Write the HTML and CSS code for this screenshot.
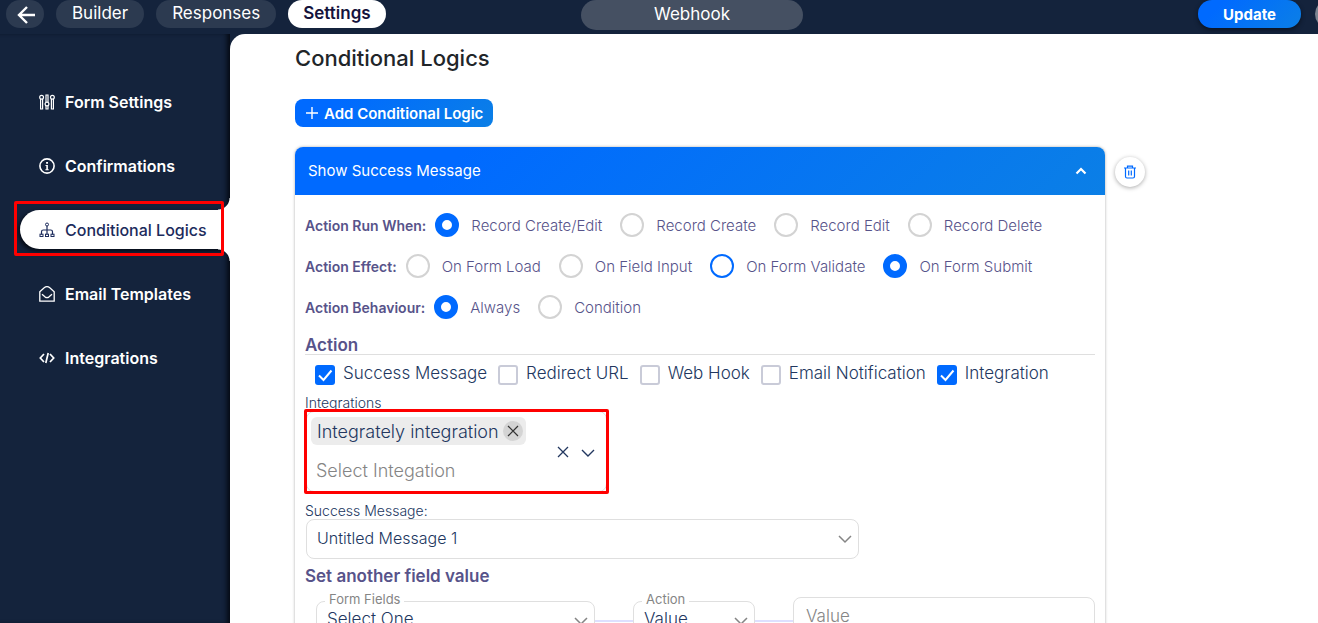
FILE: index.html
```html
<!DOCTYPE html>
<html lang="en">
<head>
<meta charset="utf-8">
<meta name="viewport" content="width=device-width, initial-scale=1">
<title>Webhook - Conditional Logics</title>
<link rel="stylesheet" href="styles.css">
</head>
<body class="app">
<header class="topbar">
  <nav class="tabs" aria-label="Form">
    <a class="tab back" href="#" aria-label="Back"><svg width="20" height="20" viewBox="0 0 20 20"><path d="M19 11H3M11 3L3 11l8 8" fill="none" stroke="currentColor" stroke-width="2.400"/></svg></a>
    <a class="tab" href="#">Builder</a>
    <a class="tab" href="#">Responses</a>
    <a class="tab tab-active" href="#">Settings</a>
  </nav>
  <input class="form-name" type="text" value="Webhook" aria-label="Form name">
  <div class="top-actions">
    <button class="update" type="button">Update</button>
    <a class="close" href="#" aria-label="Close"></a>
  </div>
</header>
<div class="layout">
  <nav class="sidebar" aria-label="Settings">
    <a class="side-link" href="#"><svg class="side-icon" viewBox="0 0 16 16"><g fill="none" stroke="currentColor" stroke-width="1.200"><circle cx="2.600" cy="3.200" r="1.900"/><circle cx="8" cy="10" r="1.900"/><circle cx="13.400" cy="3.200" r="1.900"/><path d="M1.600 5v10h2V5M12.400 5v10h2V5M7 8.200V1h2v7.200M7 11.800V15h2v-3.200"/></g></svg>Form Settings</a>
    <a class="side-link" href="#"><svg class="side-icon" viewBox="0 0 16 16"><circle cx="8" cy="8" r="7.100" fill="none" stroke="currentColor" stroke-width="1.600"/><path d="M7.100 4h1.900v1.700H7.100zM6.500 7h2.400v4.200h.8v1H6.400v-1h.9V8h-.8z" fill="currentColor"/></svg>Confirmations</a>
    <a class="side-link side-active" href="#"><svg class="side-icon" viewBox="0 0 16 16"><g fill="none" stroke="currentColor"><circle cx="8" cy="2.500" r="1.500"/><path d="M8 4v8.500M2.500 12.500V9.800Q2.500 8 4.300 8h7.400q1.800 0 1.800 1.800v2.700" stroke-width="1.200"/><rect x="1" y="12.200" width="3" height="2.300"/><rect x="6.500" y="12.200" width="3" height="2.300"/><rect x="12" y="12.200" width="3" height="2.300"/></g></svg>Conditional Logics<span class="callout callout-nav"></span></a>
    <a class="side-link" href="#"><svg class="side-icon" viewBox="0 0 16 16"><g fill="none" stroke="currentColor" stroke-width="1.300"><path d="M.8 5.800L5.500 1.600Q8-.3 10.500 1.600l4.700 4.200v9.300H.8z"/><path d="M3 8.200l3.200 2.900q1.800 1.200 3.600 0L13 8.200"/></g></svg>Email Templates</a>
    <a class="side-link" href="#"><svg class="side-icon" viewBox="0 0 16 16"><path d="M5 4L1.300 8 5 12M11 4l3.700 4L11 12M9.200 3L6.800 13" fill="none" stroke="currentColor" stroke-width="1.700"/></svg>Integrations</a>
  </nav>
  <main class="content">
    <h1 class="title">Conditional Logics</h1>
    <button class="add" type="button"><svg width="12" height="12" viewBox="0 0 12 12"><path d="M6 0v12M0 6h12" stroke="currentColor" stroke-width="1.400"/></svg>Add Conditional Logic</button>
    <div class="logic-row">
      <section class="card">
        <button class="card-head" type="button" aria-expanded="true">Show Success Message<svg width="12" height="12" viewBox="0 0 12 12"><path d="M1.500 9.500L6 5l4.500 4.500" fill="none" stroke="currentColor" stroke-width="2.200"/></svg></button>
        <form class="card-body">
          <div class="radio-row" role="radiogroup" aria-labelledby="run"><b class="row-label" id="run">Action Run When:</b>
            <label class="option"><input class="radio" type="radio" name="run" checked>Record Create/Edit</label>
            <label class="option"><input class="radio" type="radio" name="run">Record Create</label>
            <label class="option"><input class="radio" type="radio" name="run">Record Edit</label>
            <label class="option"><input class="radio" type="radio" name="run">Record Delete</label>
          </div>
          <div class="radio-row" role="radiogroup" aria-labelledby="effect"><b class="row-label" id="effect">Action Effect:</b>
            <label class="option"><input class="radio" type="radio" name="effect">On Form Load</label>
            <label class="option"><input class="radio" type="radio" name="effect">On Field Input</label>
            <label class="option"><input class="radio radio-hover" type="radio" name="effect">On Form Validate</label>
            <label class="option"><input class="radio" type="radio" name="effect" checked>On Form Submit</label>
          </div>
          <div class="radio-row" role="radiogroup" aria-labelledby="behaviour"><b class="row-label" id="behaviour">Action Behaviour:</b>
            <label class="option"><input class="radio" type="radio" name="behaviour" checked>Always</label>
            <label class="option"><input class="radio" type="radio" name="behaviour">Condition</label>
          </div>
          <h2 class="subtitle ruled">Action</h2>
          <div class="checks">
            <label class="check"><span class="tick"><input class="checkbox" type="checkbox" checked><svg class="tick-mark" viewBox="0 0 20 20"><path d="M4 10.500l4.500 4.500L16.500 5.500"/></svg></span>Success Message</label>
            <label class="check"><span class="tick"><input class="checkbox" type="checkbox"></span>Redirect URL</label>
            <label class="check"><span class="tick"><input class="checkbox" type="checkbox"></span>Web Hook</label>
            <label class="check"><span class="tick"><input class="checkbox" type="checkbox"></span>Email Notification</label>
            <label class="check"><span class="tick"><input class="checkbox" type="checkbox" checked><svg class="tick-mark" viewBox="0 0 20 20"><path d="M4 10.500l4.500 4.500L16.500 5.500"/></svg></span>Integration</label>
          </div>
          <label class="field-label" for="integration">Integrations</label>
          <div class="multi">
            <div class="multi-main">
              <span class="chip">Integrately integration<button class="chip-x" type="button" aria-label="Remove Integrately integration"><svg width="12" height="12" viewBox="0 0 12 12"><path d="M1 1l10 10M11 1L1 11" stroke="currentColor" stroke-width="1.200"/></svg></button></span>
              <input class="multi-input" id="integration" type="text" placeholder="Select Integation">
            </div>
            <button class="plain" type="button" aria-label="Clear"><svg width="12" height="12" viewBox="0 0 12 12"><path d="M1 1l10 10M11 1L1 11" stroke="currentColor" stroke-width="1.300"/></svg></button>
            <button class="plain" type="button" aria-label="Open list"><svg width="14" height="14" viewBox="0 0 14 14"><path d="M1 5l6 6 6-6" fill="none" stroke="currentColor" stroke-width="1.400"/></svg></button>
            <span class="callout callout-field"></span>
          </div>
          <label class="field-label" for="message">Success Message:</label>
          <div class="picker picker-message"><select class="select" id="message"><option>Untitled Message 1</option></select><svg class="chevron" viewBox="0 0 14 14"><path d="M1 4l6 6 6-6"/></svg></div>
          <h2 class="subtitle">Set another field value</h2>
          <div class="assign">
            <div class="picker picker-field"><label class="float-label" for="field">Form Fields</label><select class="select select-low" id="field"><option>Select One</option></select><svg class="chevron" viewBox="0 0 14 14"><path d="M1 4l6 6 6-6"/></svg></div>
            <span class="link-line"></span>
            <div class="picker picker-action"><label class="float-label" for="action">Action</label><select class="select select-low" id="action"><option>Value</option></select><svg class="chevron" viewBox="0 0 14 14"><path d="M1 4l6 6 6-6"/></svg></div>
            <span class="link-line"></span>
            <input class="value" type="text" placeholder="Value" aria-label="Value">
          </div>
        </form>
      </section>
      <button class="trash" type="button" aria-label="Delete logic"><svg width="14" height="14" viewBox="0 0 14 14"><g fill="none" stroke="currentColor" stroke-width="1.200"><path d="M1 3h12M4.500 3V1.200h5V3M2.500 3v8.500q0 1.500 1.500 1.500h6q1.500 0 1.500-1.500V3M5.700 5.500v5M8.300 5.500v5"/></g></svg></button>
    </div>
  </main>
</div>
</body>
</html>
```

FILE: styles.css
```css
* { box-sizing: border-box; }

.app {
  --navy: #14233c;
  --blue: #006aff;
  --ink: #22375f;
  --violet: #57538a;
  --line: #dfdfdf;
  --gradient: linear-gradient(135deg, #006aff 20%, #0b7fe6);
  margin: 0;
  height: 100vh;
  overflow: hidden;
  display: flex;
  flex-direction: column;
  background: var(--navy);
  color: var(--ink);
  font-family: Inter, "Open Sans", sans-serif;
  font-size: 17px;
}

button, input, select { font: inherit; color: inherit; }
button { border: 0; padding: 0; cursor: pointer; }
a { text-decoration: none; color: inherit; }
svg { flex: none; }

.topbar {
  display: grid;
  grid-template-columns: 1fr 222px 1fr;
  align-items: start;
  height: 34px;
  flex: none;
}

.tabs { display: flex; gap: 12px; padding-left: 6px; }
.tab {
  display: flex;
  align-items: center;
  height: 28px;
  padding: 0 16px 2px;
  border-radius: 14px;
  background: #2c3a50;
  color: #fff;
}
.back { width: 38px; padding: 0 10px; }
.tab-active { padding: 0 15px 2px; background: #fff; color: #15133c; font-weight: 600; }

.form-name {
  width: 100%;
  height: 30px;
  margin-left: 33px;
  padding: 0 0 2px;
  border: 0;
  border-radius: 15px;
  background: #455062;
  color: #fff;
  text-align: center;
}

.top-actions { display: flex; justify-content: flex-end; gap: 14px; height: 34px; overflow: hidden; }
.update {
  width: 103px;
  height: 28px;
  border-radius: 14px;
  background: var(--gradient);
  box-shadow: 0 2px 4px #0a1322;
  color: #fff;
  font-size: 15px;
  font-weight: 700;
}
.close { width: 28px; height: 28px; margin-right: -25px; border-radius: 14px; background: #7c8491; }

.layout { display: flex; flex: 1; min-height: 0; }

.sidebar {
  width: 230px;
  flex: none;
  padding-top: 48px;
  display: flex;
  flex-direction: column;
  gap: 25px;
  box-shadow: inset -5px 0 5px -2px #050a14;
}
.side-link {
  position: relative;
  display: flex;
  align-items: center;
  gap: 10px;
  height: 39px;
  margin-left: 20px;
  padding-left: 19px;
  color: #fff;
  font-size: 16px;
  font-weight: 600;
  white-space: nowrap;
}
.side-icon { width: 16px; height: 16px; }
.side-active {
  border-radius: 20px 0 0 20px;
  background: #fff;
  color: #1c2b5c;
  font-weight: 500;
  box-shadow: -2px 2px 4px #050a14;
}
.side-active::before, .side-active::after {
  content: "";
  position: absolute;
  right: 0;
  width: 12px;
  height: 12px;
}
.side-active::before { bottom: 100%; background: radial-gradient(circle at 0 0, transparent 11px, #fff 12px); }
.side-active::after { top: 100%; background: radial-gradient(circle at 0 100%, transparent 11px, #fff 12px); }

.callout { position: absolute; z-index: 1; border: 3px solid #f00; border-radius: 2px; pointer-events: none; }
.callout-nav { inset: -9px 6px -7px -6px; }
.callout-field { inset: -3px -3px -3px -3px; }

.content {
  position: relative;
  flex: 1;
  min-width: 0;
  padding: 10px 24px 0 65px;
  background: #fff;
  border-top-left-radius: 15px;
}
.title { margin: 0; color: #212529; font-size: 22px; line-height: 28px; font-weight: 500; }
.add {
  display: flex;
  align-items: center;
  gap: 6px;
  height: 28px;
  margin: 27px 0 20px;
  padding: 0 10px 0 11px;
  border-radius: 8px;
  background: var(--gradient);
  color: #fff;
  font-size: 15px;
  font-weight: 600;
}

.logic-row { display: flex; align-items: flex-start; gap: 10px; }
.card {
  flex: 1;
  max-width: 810px;
  border-radius: 8px;
  background: #fff;
  box-shadow: 0 0 3px #aaa;
}
.card-head {
  display: flex;
  align-items: center;
  justify-content: space-between;
  width: 100%;
  height: 48px;
  padding: 0 18px 2px 13px;
  border-radius: 8px 8px 0 0;
  background: var(--gradient);
  color: #fff;
  font-size: 15px;
}
.trash {
  display: grid;
  place-items: center;
  width: 30px;
  height: 30px;
  margin-top: 10px;
  border-radius: 15px;
  background: #fff;
  color: var(--blue);
  box-shadow: 0 1px 4px #aaa;
}

.card-body { padding: 18px 10px 40px; }
.radio-row {
  display: flex;
  align-items: center;
  gap: 18px;
  height: 24px;
  margin-bottom: 17px;
  color: var(--violet);
  font-size: 15px;
  white-space: nowrap;
}
.row-label { margin-right: -9px; font-size: 14px; font-weight: 600; }
.option { display: flex; align-items: center; gap: 12px; font-weight: 300; }
.radio {
  appearance: none;
  width: 24px;
  height: 24px;
  margin: 0;
  border: 2px solid #d3d3d3;
  border-radius: 12px;
  background: #fff;
}
.radio:checked { border: 7px solid var(--blue); }
.radio-hover { border-color: var(--blue); }

.subtitle { margin: 0; color: var(--violet); font-size: 17px; line-height: 18px; font-weight: 600; }
.ruled { border-bottom: 1px solid var(--line); }
.checks {
  display: flex;
  gap: 11px;
  height: 39px;
  padding: 8px 0 0 10px;
  font-weight: 300;
  white-space: nowrap;
}
.check { display: flex; gap: 8px; line-height: 20px; }
.tick { display: grid; margin-top: 2px; height: 20px; }
.checkbox {
  grid-area: 1 / 1;
  appearance: none;
  width: 20px;
  height: 20px;
  margin: 0;
  border: 2px solid #c9cbd8;
  border-radius: 3px;
}
.checkbox:checked { border: 0; background: var(--blue); }
.tick-mark { grid-area: 1 / 1; width: 20px; height: 20px; fill: none; stroke: #fff; stroke-width: 2; }

.field-label { display: block; font-size: 14px; line-height: 17px; font-weight: 300; }
.multi {
  position: relative;
  display: flex;
  align-items: center;
  gap: 12px;
  width: 301px;
  height: 81px;
  margin: 0 0 10px 1px;
  padding: 5px 11px 5px 4px;
  border: 1px solid var(--line);
  border-radius: 8px;
}
.multi-main { flex: 1; min-width: 0; align-self: flex-start; display: flex; flex-direction: column; align-items: flex-start; gap: 12px; }
.chip {
  display: flex;
  align-items: center;
  gap: 4px;
  height: 28px;
  padding: 0 3px 0 6px;
  border-radius: 6px;
  background: #ececec;
  font-size: 18px;
  font-weight: 300;
  white-space: nowrap;
}
.chip-x { display: grid; place-items: center; width: 20px; height: 20px; border-radius: 10px; background: #d4d4d4; color: #333; }
.multi-input { width: 100%; height: 26px; padding: 0 5px; border: 0; outline: 0; font-size: 18px; font-weight: 300; }
.multi-input::placeholder, .value::placeholder { color: #858585; opacity: 1; }
.plain { display: grid; background: none; }

.picker { position: relative; display: grid; align-items: center; }
.picker-message { width: 553px; max-width: 100%; margin: 0 0 8px 1px; }
.select {
  grid-area: 1 / 1;
  appearance: none;
  width: 100%;
  height: 40px;
  padding: 0 30px 2px 10px;
  border: 1px solid var(--line);
  border-radius: 8px;
  background: #fff;
  font-size: 16px;
  font-weight: 300;
}
.select-low { padding-bottom: 4px; font-size: 17px; }
.chevron {
  grid-area: 1 / 1;
  justify-self: end;
  position: relative;
  width: 14px;
  height: 14px;
  margin-right: 7px;
  fill: none;
  stroke: #858585;
  stroke-width: 1.5;
  pointer-events: none;
}
.assign { display: flex; align-items: center; padding: 12px 0 0 11px; }
.picker-field { width: 279px; }
.picker-action { width: 122px; }
.link-line { flex: 0 0 38px; height: 2px; background: #dde0ff; }
.float-label {
  position: absolute;
  top: -10px;
  left: 9px;
  z-index: 1;
  padding: 0 4px;
  background: #fff;
  color: #858585;
  font-size: 13px;
  line-height: 16px;
}
.value {
  flex: 1;
  min-width: 0;
  height: 48px;
  padding: 0 12px 10px;
  border: 1px solid var(--line);
  border-radius: 8px;
  font-weight: 300;
}
```
